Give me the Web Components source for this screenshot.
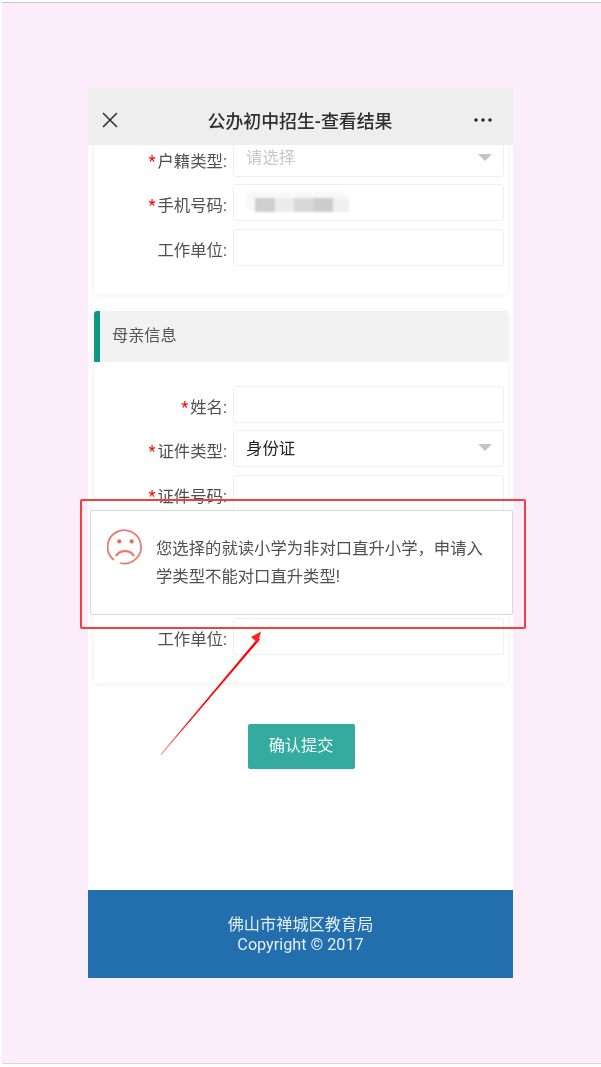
<!DOCTYPE html>
<html lang="zh-CN">
<head>
<meta charset="utf-8">
<title>公办初中招生-查看结果</title>
<style>
    html, body { margin: 0; background: #fff; }
    body { font-family: Roboto, "Noto Sans CJK SC", sans-serif; }
</style>
</head>
<body>

<app-screen>
    <top-bar title="公办初中招生-查看结果"></top-bar>
    <form-card class="first">
        <form-row label="户籍类型" required type="select" placeholder="请选择"></form-row>
        <form-row label="手机号码" required><masked-value></masked-value></form-row>
        <form-row label="工作单位"></form-row>
    </form-card>
    <form-card heading="母亲信息">
        <form-row label="姓名" required></form-row>
        <form-row label="证件类型" required type="select" value="身份证"></form-row>
        <form-row label="证件号码" required></form-row>
        <div style="height:92px"></div>
        <form-row label="工作单位"></form-row>
    </form-card>
    <submit-button>确认提交</submit-button>
    <page-footer slot="footer">
        <div>佛山市禅城区教育局</div>
        <div>Copyright © 2017</div>
    </page-footer>
    <error-toast slot="overlay">您选择的就读小学为非对口直升小学&#xFF0C;申请入学类型不能对口直升类型!</error-toast>
    <mark-arrow slot="overlay"></mark-arrow>
</app-screen>

<script>
// Fond de la capture + cadre du téléphone
class AppScreen extends HTMLElement {
    constructor() {
        super();
        const shadow = this.attachShadow({ mode: 'open' });
        shadow.innerHTML = `
            <style>
                :host {
                    display: block;
                    box-sizing: border-box;
                    height: 1062px;
                    margin: 2px 0 0 2px;
                    padding: 85px 0 0 86px;
                    background: #fbedf9;
                    border-top: 1px solid #d9bfd6;
                    border-bottom: 1px solid #e4cfe1;
                    filter: blur(.4px);
                }
                .frame {
                    position: relative;
                    display: flex;
                    flex-direction: column;
                    width: 425px;
                    height: 890px;
                    background: #fff;
                }
                .content { flex: 1; padding: 0 5px 0 6px; }
            </style>
            <div class="frame">
                <div class="content"><slot></slot></div>
                <slot name="footer"></slot>
                <slot name="overlay"></slot>
            </div>
        `;
    }
}

class TopBar extends HTMLElement {
    constructor() {
        super();
        const shadow = this.attachShadow({ mode: 'open' });
        const title = this.getAttribute('title');
        shadow.innerHTML = `
            <style>
                :host {
                    position: relative;
                    z-index: 1;
                    display: flex;
                    align-items: center;
                    justify-content: space-between;
                    box-sizing: border-box;
                    height: 57px;
                    margin: 0 -5px 0 -6px;
                    padding: 7px 20px 0 13px;
                    background: #eee;
                    color: #2f2f2f;
                }
                h1 { margin: 0 0 0 8px; font-size: 17.9px; font-weight: 500; }
                svg { display: block; }
            </style>
            <svg width="18" height="18" viewBox="0 0 18 18"><path d="M2 2 16 16M16 2 2 16" stroke="#333" stroke-width="1.6" fill="none"/></svg>
            <h1>${title}</h1>
            <svg width="20" height="6" viewBox="0 0 20 6"><circle cx="3" cy="3" r="1.7" fill="#222"/><circle cx="10" cy="3" r="1.7" fill="#222"/><circle cx="17" cy="3" r="1.7" fill="#222"/></svg>
        `;
    }
}

class FormCard extends HTMLElement {
    constructor() {
        super();
        const shadow = this.attachShadow({ mode: 'open' });
        const heading = this.getAttribute('heading');
        const isFirst = this.classList.contains('first');
        shadow.innerHTML = `
            <style>
                :host {
                    display: block;
                    margin-top: ${isFirst ? '-5px' : '17px'};
                    background: #fff;
                    border-radius: 3px;
                    box-shadow: 0 1px 6px rgba(0,0,0,.07);
                }
                .head {
                    height: 51px;
                    box-sizing: border-box;
                    padding: 0 0 4px 12px;
                    display: flex;
                    align-items: center;
                    background: #f2f2f2;
                    border-left: 6px solid #0d9a85;
                    border-radius: 3px 3px 0 0;
                    color: #555;
                    font-size: 16.2px;
                }
                .body {
                    display: flex;
                    flex-direction: column;
                    gap: 7.4px;
                    padding: ${isFirst ? '0' : '24px'} 4px 28px 0;
                }
            </style>
            ${heading ? `<div class="head">${heading}</div>` : ''}
            <div class="body"><slot></slot></div>
        `;
    }
}

class FormRow extends HTMLElement {
    constructor() {
        super();
        const shadow = this.attachShadow({ mode: 'open' });
        const label = this.getAttribute('label');
        const required = this.hasAttribute('required');
        const isSelect = this.getAttribute('type') === 'select';
        const value = this.getAttribute('value');
        const placeholder = this.getAttribute('placeholder');
        shadow.innerHTML = `
            <style>
                :host {
                    display: grid;
                    grid-template-columns: 133px 1fr;
                    column-gap: 6px;
                    height: 37px;
                    font-size: 16.4px;
                    color: #505050;
                }
                .label { padding-top: 10px; text-align: right; line-height: 24px; white-space: nowrap; }
                .star { color: #f00; margin-right: 2px; }
                .box {
                    position: relative;
                    box-sizing: border-box;
                    display: flex;
                    align-items: center;
                    padding: 0 12px 4px;
                    background: #fff;
                    border: 1.5px solid #efefef;
                    border-radius: 3px;
                }
                .value { color: #222; }
                .placeholder { color: #c8c8c8; position: relative; top: -1px; }
                .caret {
                    position: absolute;
                    right: 11px;
                    top: 13px;
                    border-left: 7px solid transparent;
                    border-right: 7px solid transparent;
                    border-top: 7px solid #c4c4c4;
                }
            </style>
            <div class="label">${required ? '<span class="star">*</span>' : ''}${label}:</div>
            <div class="box">
                ${value ? `<span class="value">${value}</span>` : ''}
                ${placeholder ? `<span class="placeholder">${placeholder}</span>` : ''}
                <slot></slot>
                ${isSelect ? '<span class="caret"></span>' : ''}
            </div>
        `;
    }
}

// Numéro de téléphone flouté dans la capture
class MaskedValue extends HTMLElement {
    constructor() {
        super();
        const shadow = this.attachShadow({ mode: 'open' });
        shadow.innerHTML = `
            <style>
                :host {
                    display: flex;
                    box-sizing: border-box;
                    margin: 2px 0 0 -1px;
                    padding: 6px 0 0 10px;
                    width: 105px;
                    height: 20px;
                    background: #f8f8f8;
                    border-radius: 9px 12px 9px 9px;
                    filter: blur(.8px);
                }
                i { display: block; width: 19.5px; height: 14px; }
            </style>
            <i style="background:#cfcfcf"></i>
            <i style="background:#ececec"></i>
            <i style="background:#d8d8d8"></i>
            <i style="background:#cdcdcd"></i>
            <i style="background:#f0f0f0;width:16px"></i>
        `;
    }
}

class SubmitButton extends HTMLElement {
    constructor() {
        super();
        const shadow = this.attachShadow({ mode: 'open' });
        shadow.innerHTML = `
            <style>
                :host {
                    display: flex;
                    align-items: center;
                    justify-content: center;
                    box-sizing: border-box;
                    width: 107px;
                    height: 45px;
                    margin: 41px auto 0;
                    padding-bottom: 6px;
                    background: #35ab9f;
                    border-radius: 2px;
                    color: #f2fbf9;
                    font-size: 16.2px;
                }
            </style>
            <slot></slot>
        `;
    }
}

class PageFooter extends HTMLElement {
    constructor() {
        super();
        const shadow = this.attachShadow({ mode: 'open' });
        shadow.innerHTML = `
            <style>
                :host {
                    display: flex;
                    flex-direction: column;
                    justify-content: center;
                    box-sizing: border-box;
                    height: 88px;
                    padding-top: 2px;
                    background: #236fad;
                    color: #e4eef6;
                    font-size: 16.2px;
                    line-height: 20px;
                    text-align: center;
                }
            </style>
            <slot></slot>
        `;
    }
}

class ErrorToast extends HTMLElement {
    constructor() {
        super();
        const shadow = this.attachShadow({ mode: 'open' });
        shadow.innerHTML = `
            <style>
                :host {
                    position: absolute;
                    z-index: 2;
                    left: 2px;
                    right: 0;
                    top: 422px;
                    height: 105px;
                    box-sizing: border-box;
                    display: flex;
                    gap: 13px;
                    padding: 18px 28px 0 16px;
                    background: #fff;
                    border: 1px solid #d9d9d9;
                    border-radius: 2px;
                    color: #505050;
                    font-size: 16.35px;
                    line-height: 28px;
                }
                svg { flex: none; }
                .text { margin-top: 6px; }
                .mark {
                    position: absolute;
                    left: -11px;
                    top: -12px;
                    width: 446px;
                    height: 130px;
                    box-sizing: border-box;
                    border: 2px solid #f43f3c;
                    border-radius: 2px;
                }
            </style>
            <svg width="36" height="36" viewBox="0 0 36 36" fill="none" stroke="#ea7a70">
                <path d="M7 31A16.7 16.7 0 1 1 13 34" stroke-width="1.8"/>
                <circle cx="12.3" cy="12.4" r="2.1" fill="#e8695e" stroke="none"/>
                <circle cx="24.7" cy="12.4" r="2.1" fill="#e8695e" stroke="none"/>
                <path d="M9 27C13 20.5 23 20.5 27 27" stroke-width="2.4"/>
            </svg>
            <div class="text"><slot></slot></div>
            <div class="mark"></div>
        `;
    }
}

// Flèche rouge d'annotation
class MarkArrow extends HTMLElement {
    constructor() {
        super();
        const shadow = this.attachShadow({ mode: 'open' });
        shadow.innerHTML = `
            <style>
                :host { position: absolute; z-index: 3; left: 70px; top: 538px; }
                svg { display: block; }
            </style>
            <svg width="110" height="130" viewBox="0 0 110 130">
                <defs>
                    <linearGradient id="fade" x1="0" y1="1" x2="1" y2="0">
                        <stop offset="0" stop-color="#ff7a7a"/>
                        <stop offset=".3" stop-color="#f00"/>
                    </linearGradient>
                </defs>
                <polygon points="2.5,128.5 100,12 102,13.5 3.2,129" fill="url(#fade)"/>
                <polygon points="103,5.5 100,17 93,11" fill="#f22"/>
            </svg>
        `;
    }
}

customElements.define('app-screen', AppScreen);
customElements.define('top-bar', TopBar);
customElements.define('form-card', FormCard);
customElements.define('form-row', FormRow);
customElements.define('masked-value', MaskedValue);
customElements.define('submit-button', SubmitButton);
customElements.define('page-footer', PageFooter);
customElements.define('error-toast', ErrorToast);
customElements.define('mark-arrow', MarkArrow);
</script>
</body>
</html>
